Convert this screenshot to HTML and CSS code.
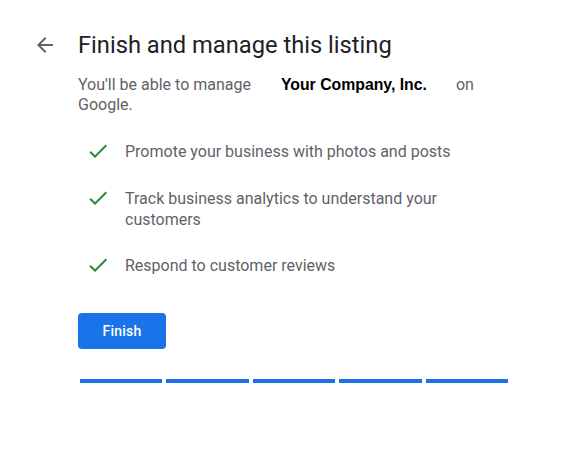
FILE: index.html
```html
<!DOCTYPE html>
<html lang="en">
<head>
<meta charset="utf-8">
<title>Finish and manage this listing</title>
<link rel="stylesheet" href="styles.css">
</head>
<body>
	<div class="page">
		<div class="header">
			<button class="back" aria-label="Back">
				<svg width="24" height="24" viewBox="0 0 24 24"><path d="M20 11H7.83l5.59-5.59L12 4l-8 8 8 8 1.41-1.41L7.83 13H20v-2z" fill="#5f6368"/></svg>
			</button>
			<h1>Finish and manage this listing</h1>
		</div>
		<div class="content">
			<p class="intro">You'll be able to manage <b class="company">Your Company, Inc.</b> on Google.</p>
			<ul class="perks">
				<li>
					<svg class="check" width="24" height="24" viewBox="0 0 24 24"><path d="M9 16.17L4.83 12l-1.42 1.41L9 19 21 7l-1.41-1.41z" fill="#1e8e3e"/></svg>
					<span>Promote your business with photos and posts</span>
				</li>
				<li>
					<svg class="check" width="24" height="24" viewBox="0 0 24 24"><path d="M9 16.17L4.83 12l-1.42 1.41L9 19 21 7l-1.41-1.41z" fill="#1e8e3e"/></svg>
					<span>Track business analytics to understand your customers</span>
				</li>
				<li>
					<svg class="check" width="24" height="24" viewBox="0 0 24 24"><path d="M9 16.17L4.83 12l-1.42 1.41L9 19 21 7l-1.41-1.41z" fill="#1e8e3e"/></svg>
					<span>Respond to customer reviews</span>
				</li>
			</ul>
			<button class="finish">Finish</button>
			<div class="progress">
				<span></span><span></span><span></span><span></span><span></span>
			</div>
		</div>
	</div>
</body>
</html>
```

FILE: styles.css
```css
* {
	margin: 0;
	padding: 0;
	box-sizing: border-box;
}

body {
	font-family: Roboto, "Liberation Sans", Arial, sans-serif;
	background: #fff;
	color: #202124;
}

.page {
	padding: 31px 0 0 33px;
}

.header {
	display: flex;
	align-items: center;
	gap: 21px;
}

.back {
	border: none;
	background: none;
	width: 24px;
	height: 24px;
	display: flex;
}

h1 {
	font-size: 23.7px;
	font-weight: 400;
	line-height: 28px;
	color: #202124;
}

.content {
	padding-left: 45px;
	width: 474px;
}

.intro {
	margin-top: 16px;
	font-size: 16px;
	line-height: 20px;
	color: #5f6368;
	width: 420px;
}

.company {
	display: inline-block;
	font-family: "Liberation Sans", Arial, sans-serif;
	font-size: 15.8px;
	font-weight: bold;
	color: #000;
	margin: 0 25px 0 26px;
}

li {
	list-style: none;
}

.perks {
	margin-top: 26px;
}

.perks li {
	display: flex;
	align-items: flex-start;
	gap: 15px;
	padding-left: 8px;
	margin-bottom: 25px;
	font-size: 16px;
	line-height: 21px;
	color: #5f6368;
}

.perks span {
	width: 360px;
}

.check {
	flex: none;
	margin-top: -2px;
}

.finish {
	display: block;
	margin-top: 36px;
	width: 88px;
	height: 36px;
	border: none;
	border-radius: 4px;
	background: #1a73e8;
	color: #fff;
	font-family: Roboto, "Liberation Sans", Arial, sans-serif;
	font-size: 14px;
	font-weight: 500;
	letter-spacing: 0.25px;
}

.progress {
	display: flex;
	gap: 4px;
	margin: 30px 0 0 2px;
	width: 428px;
}

.progress span {
	flex: 1;
	height: 4px;
	background: #1a73e8;
}
```
